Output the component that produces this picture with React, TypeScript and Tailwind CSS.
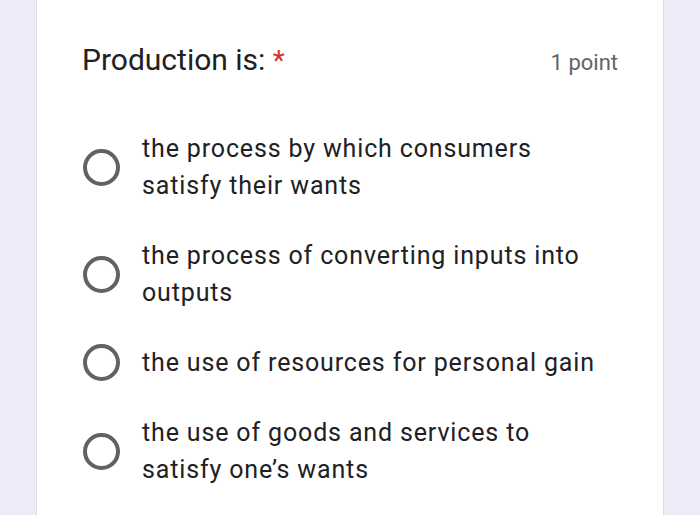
const options = [
  ["the process by which consumers", "satisfy their wants"],
  ["the process of converting inputs into", "outputs"],
  ["the use of resources for personal gain"],
  ["the use of goods and services to", "satisfy one\u2019s wants"],
];

function Radio() {
  return <div className="w-[37px] h-[37px] shrink-0 rounded-full border-[4px] border-[#5f6368]" />;
}

export default function App() {
  return (
    <div className="w-[700px] h-[515px] bg-[#ecebf7] flex justify-center overflow-hidden font-['Roboto',sans-serif]">
      <div className="w-[628px] h-full bg-white border-x border-[#dcdbe6] pl-[45px] pr-[45px] pt-[40px]">
        <div className="flex items-start justify-between">
          <h1 className="text-[30px] leading-[40px] text-[#202124]">
            Production is: <span className="text-[#d93025] text-[28px] leading-none">*</span>
          </h1>
          <span className="text-[22px] leading-[46px] text-[#5f6368]">1 point</span>
        </div>
        <div className="mt-[44px] flex flex-col gap-[33px]">
          {options.map((lines, i) => (
            <div key={i} className="flex items-center gap-[22px] pl-[1px]">
              <Radio />
              <div className="text-[25px] leading-[37px] tracking-[0.85px] text-[#202124]">
                {lines.map((l) => (
                  <div key={l}>{l}</div>
                ))}
              </div>
            </div>
          ))}
        </div>
      </div>
    </div>
  );
}
